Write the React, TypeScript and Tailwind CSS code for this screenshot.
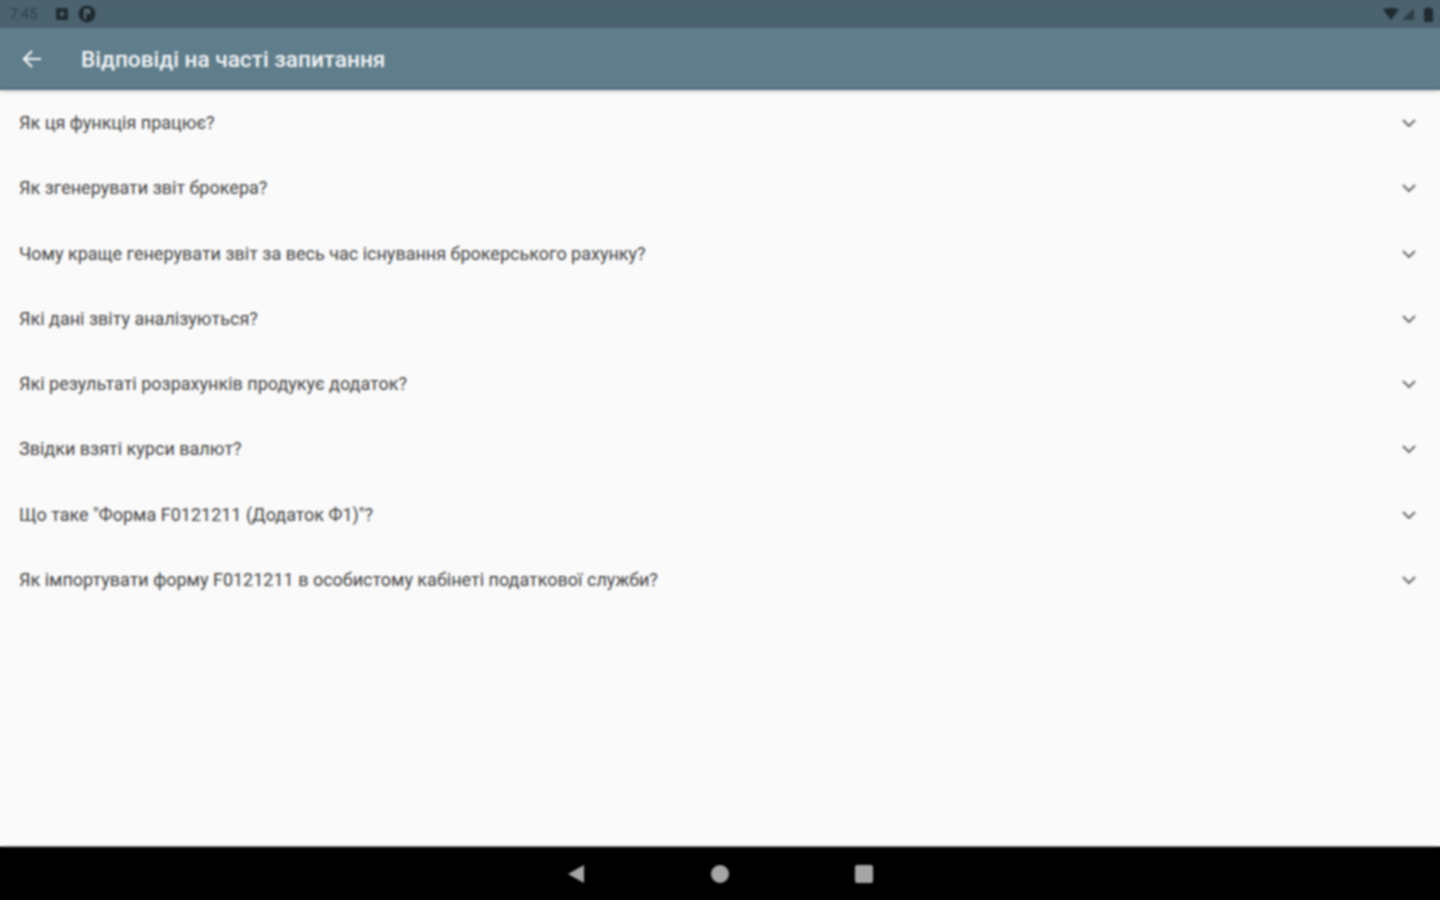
const questions = [
  "Як ця функція працює?",
  "Як згенерувати звіт брокера?",
  "Чому краще генерувати звіт за весь час існування брокерського рахунку?",
  "Які дані звіту аналізуються?",
  "Які результаті розрахунків продукує додаток?",
  "Звідки взяті курси валют?",
  'Що таке "Форма F0121211 (Додаток Ф1)"?',
  "Як імпортувати форму F0121211 в особистому кабінеті податкової служби?",
];

export default function App() {
  return (
    <div className="relative flex h-[900px] w-[1440px] flex-col overflow-hidden bg-[#fafafa] font-['Roboto',sans-serif]">
      {/* Status bar */}
      <div className="flex h-7 shrink-0 items-center justify-between bg-[#4b626f] pl-2.5 pr-[7px]">
        <div className="flex items-center">
          <span className="w-[32px] text-[14px] text-[#2f4049]">7:45</span>
          <svg width="14" height="14" viewBox="0 0 14 14" className="ml-[13px]">
            <rect x="1" y="1" width="12" height="12" rx="1" fill="#1f2b31" />
            <rect x="5" y="5" width="4" height="4" fill="#4b626f" />
          </svg>
          <svg width="18" height="18" viewBox="0 0 18 18" className="ml-[9px]">
            <circle cx="9" cy="9" r="8.500" fill="#1f2b31" />
            <path d="M7 14V5h4v3H9" stroke="#7b8f99" strokeWidth="1.500" fill="none" />
          </svg>
        </div>
        <div className="flex items-center">
          <svg width="16" height="12" viewBox="0 0 16 12">
            <path d="M0 1.500C4.500-.5 11.500-.5 16 1.500L8 12Z" fill="#1f2b31" />
          </svg>
          <svg width="12" height="12" viewBox="0 0 12 12" className="ml-[3px]">
            <path d="M12 0V12H0Z" fill="#2e3e46" />
          </svg>
          <svg width="9" height="15" viewBox="0 0 9 15" className="ml-[10px]">
            <path d="M3 0h3v1.500h3V15H0V1.500h3Z" fill="#1f2b31" />
          </svg>
        </div>
      </div>

      {/* Toolbar */}
      <header className="z-10 flex h-[62px] shrink-0 items-center border-b-2 border-[#4f6a78] bg-[#607d8b] pl-[22px] shadow-[0_2px_4px_rgba(0,0,0,0.15)]">
        <svg width="20" height="20" viewBox="0 0 20 20" fill="none" stroke="#f4f6f7" strokeWidth="2.200" className="mt-[1px]">
          <path d="M19 10H2M10 2 2 10l8 8" />
        </svg>
        <h1 className="ml-[39px] mt-[3px] text-[22.600px] font-medium text-[#f4f6f7]">Відповіді на часті запитання</h1>
      </header>

      {/* FAQ list */}
      <main className="flex-1">
        {questions.map((q) => (
          <div key={q} className="flex h-[65.250px] items-center justify-between pl-[19px] pr-6">
            <span className="text-[18px] text-[#424242]">{q}</span>
            <svg width="14" height="9" viewBox="0 0 14 9" fill="none" stroke="#6b6b6b" strokeWidth="2" className="mt-[2px]">
              <path d="m1 1 6 6 6-6" />
            </svg>
          </div>
        ))}
      </main>

      {/* Navigation bar */}
      <nav className="flex h-[54px] shrink-0 items-center justify-center gap-[126px] border-t border-[#8f8f8f] bg-black">
        <svg width="18" height="20" viewBox="0 0 18 20">
          <path d="M17 1V19L1 10Z" fill="#a6a6a6" />
        </svg>
        <div className="size-[18px] rounded-full bg-[#a6a6a6]" />
        <div className="size-[18px] rounded-[2px] bg-[#a6a6a6]" />
      </nav>

      {/* the reference is a soft, upscaled capture */}
      <div className="pointer-events-none absolute inset-0 z-20 backdrop-blur-[0.8px]" />
    </div>
  );
}
